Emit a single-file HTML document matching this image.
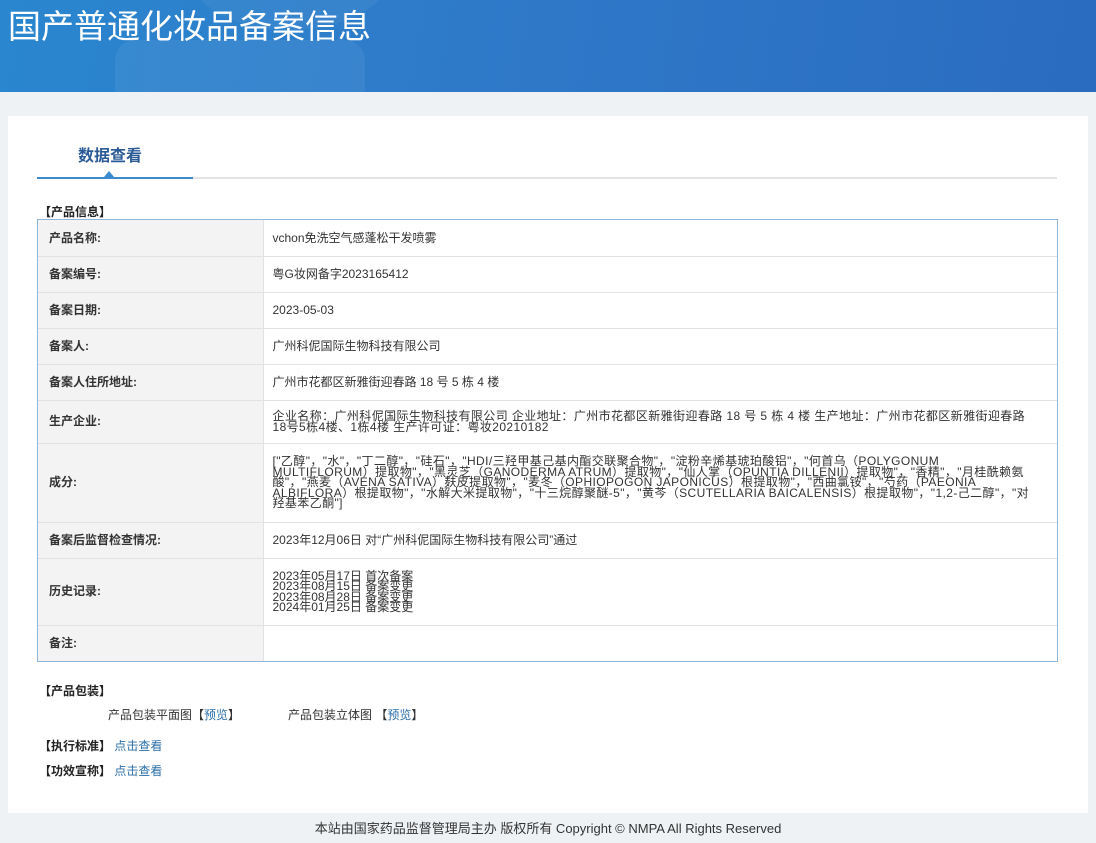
<!DOCTYPE html>
<html><head><meta charset="utf-8"><style>
*{margin:0;padding:0;box-sizing:border-box}
body{width:1096px;height:843px;background:#eef2f5;font-family:"Liberation Sans","Noto Sans CJK SC",sans-serif;font-size:12px;color:#333;position:relative;overflow:hidden}
.hdr{position:absolute;left:0;top:0;width:1096px;height:92px;background:linear-gradient(100deg,#2a86cf 0%,#2f78c8 50%,#2a6cc0 100%);overflow:hidden}
.hdr h1{position:absolute;left:8px;top:0px;color:#fff;font-size:33px;font-weight:normal;font-family:"Noto Sans CJK SC",sans-serif}
.c1{position:absolute;left:115px;top:40px;width:250px;height:120px;background:rgba(255,255,255,.06);border-radius:20px}
.c2{position:absolute;left:190px;top:-80px;width:200px;height:110px;background:rgba(255,255,255,.05);border-radius:50%}
.card{position:absolute;left:8px;top:116px;width:1080px;height:697px;background:#fff}
.tab{position:absolute;left:78px;top:142px;font-size:16px;font-weight:bold;color:#2b5b96}
.tl{position:absolute;left:37px;top:177px;width:1020px;height:2px;background:#e4e4e4}
.tb{position:absolute;left:37px;top:177px;width:156px;height:2px;background:#3a8bd0}
.tri{position:absolute;left:104px;top:171px;border:5px solid transparent;border-bottom:6px solid #3a8bd0;border-top:0}
.sec{position:absolute;left:39px;font-weight:bold;color:#222;font-size:12px}
.wrap{position:absolute;left:37px;top:219px;width:1021px;border:1px solid #8fb6db}
table{width:100%;border-collapse:collapse}
td{border:1px solid #e2e2e2;vertical-align:middle;line-height:10.5px;font-size:12px;white-space:nowrap}
tr:first-child td{border-top:0}tr:last-child td{border-bottom:0}
td.l{border-left:0;width:225px;background:#f3f3f3;font-weight:bold;padding-left:11px;color:#333}
td.v{border-right:0;padding:0 9px;color:#333}
td.w{letter-spacing:0.4px}
a{color:#2b6fa8;text-decoration:none}
.ft{position:absolute;left:0;width:1096px;top:818px;text-align:center;font-size:13px;color:#333}
.ln{position:absolute;font-size:12px}
</style></head><body>
<div class="hdr"><div class="c2"></div><div class="c1"></div><h1>国产普通化妆品备案信息</h1></div>
<div class="card"></div>
<div class="tab">数据查看</div>
<div class="tl"></div><div class="tb"></div><div class="tri"></div>
<div class="sec" style="top:203px">【产品信息】</div>
<div class="wrap"><table>
<tr style="height:36px"><td class="l">产品名称:</td><td class="v">vchon免洗空气感蓬松干发喷雾</td></tr>
<tr style="height:36px"><td class="l">备案编号:</td><td class="v">粤G妆网备字2023165412</td></tr>
<tr style="height:36px"><td class="l">备案日期:</td><td class="v">2023-05-03</td></tr>
<tr style="height:36px"><td class="l">备案人:</td><td class="v">广州科伲国际生物科技有限公司</td></tr>
<tr style="height:36px"><td class="l">备案人住所地址:</td><td class="v">广州市花都区新雅街迎春路 18 号 5 栋 4 楼</td></tr>
<tr style="height:43px"><td class="l">生产企业:</td><td class="v w">企业名称：广州科伲国际生物科技有限公司 企业地址：广州市花都区新雅街迎春路 18 号 5 栋 4 楼 生产地址：广州市花都区新雅街迎春路<br>18号5栋4楼、1栋4楼 生产许可证：粤妆20210182</td></tr>
<tr style="height:79px"><td class="l">成分:</td><td class="v w">["乙醇"，"水"，"丁二醇"，"硅石"，"HDI/三羟甲基己基内酯交联聚合物"，"淀粉辛烯基琥珀酸铝"，"何首乌（POLYGONUM<br>MULTIFLORUM）提取物"，"黑灵芝（GANODERMA ATRUM）提取物"，"仙人掌（OPUNTIA DILLENII）提取物"，"香精"，"月桂酰赖氨<br>酸"，"燕麦（AVENA SATIVA）麸皮提取物"，"麦冬（OPHIOPOGON JAPONICUS）根提取物"，"西曲氯铵"，"芍药（PAEONIA<br>ALBIFLORA）根提取物"，"水解大米提取物"，"十三烷醇聚醚-5"，"黄芩（SCUTELLARIA BAICALENSIS）根提取物"，"1,2-己二醇"，"对<br>羟基苯乙酮"]</td></tr>
<tr style="height:36px"><td class="l">备案后监督检查情况:</td><td class="v">2023年12月06日 对“广州科伲国际生物科技有限公司”通过</td></tr>
<tr style="height:67px"><td class="l">历史记录:</td><td class="v">2023年05月17日 首次备案<br>2023年08月15日 备案变更<br>2023年08月28日 备案变更<br>2024年01月25日 备案变更</td></tr>
<tr style="height:36px"><td class="l">备注:</td><td class="v"></td></tr>
</table></div>
<div class="sec" style="top:682px">【产品包装】</div>
<div class="ln" style="left:108px;top:706px">产品包装平面图【<a>预览</a>】</div>
<div class="ln" style="left:288px;top:706px">产品包装立体图 【<a>预览</a>】</div>
<div class="sec" style="top:737px">【执行标准】 <a style="font-weight:normal">点击查看</a></div>
<div class="sec" style="top:762px">【功效宣称】 <a style="font-weight:normal">点击查看</a></div>
<div class="ft">本站由国家药品监督管理局主办 版权所有 Copyright © NMPA All Rights Reserved</div>
</body></html>
